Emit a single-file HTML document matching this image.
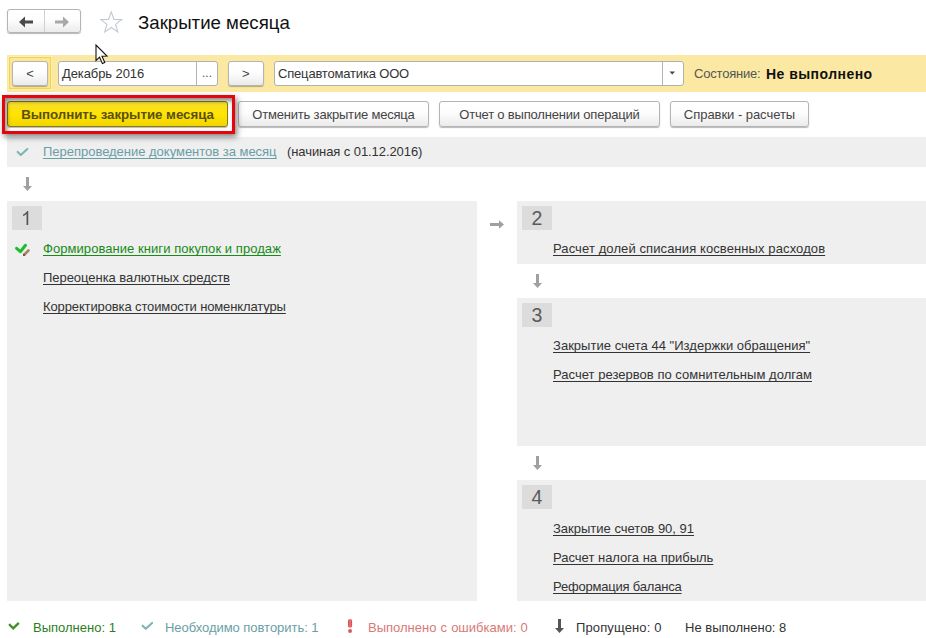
<!DOCTYPE html>
<html><head><meta charset="utf-8">
<style>
html,body{margin:0;padding:0;}
body{width:926px;height:638px;position:relative;overflow:hidden;background:#fff;font-family:"Liberation Sans",sans-serif;font-size:13px;color:#333;}
.abs{position:absolute;}
.t{position:absolute;white-space:nowrap;line-height:16px;height:16px;}
.btn{position:absolute;box-sizing:border-box;border:1px solid #b4b4b4;border-radius:3px;background:linear-gradient(#ffffff 0%,#fdfdfd 45%,#ebebeb 100%);box-shadow:0 1px 1px rgba(0,0,0,.28);text-align:center;white-space:nowrap;color:#444;}
.inp{position:absolute;box-sizing:border-box;border:1px solid #b0b0b0;border-radius:3px;background:#fff;}
.panel{position:absolute;background:#efefef;}
.num{position:absolute;background:#dcdcdc;width:30px;height:24px;text-align:center;font-size:19.5px;line-height:24px;color:#5a5a5a;}
.lnk{position:absolute;white-space:nowrap;line-height:16px;height:16px;color:#333;text-decoration:underline;text-underline-offset:2px;text-decoration-thickness:1px;text-decoration-skip-ink:none;}
</style></head><body>

<!-- nav buttons -->
<div class="btn" style="left:7px;top:9px;width:74px;height:24px;"></div>
<div class="abs" style="left:44px;top:10px;width:1px;height:22px;background:#d0d0d0;"></div>
<svg class="abs" style="left:18px;top:15.5px" width="16" height="12" viewBox="0 0 16 12"><path d="M1 6 L7 0.5 L7 4.5 L15 4.5 L15 7.5 L7 7.5 L7 11.5 Z" fill="#4a4a4a"/></svg>
<svg class="abs" style="left:54px;top:15.5px" width="16" height="12" viewBox="0 0 16 12"><path d="M15 6 L9 0.5 L9 4.5 L1 4.5 L1 7.5 L9 7.5 L9 11.5 Z" fill="#a8a8a8"/></svg>

<!-- star -->
<svg class="abs" style="left:98.7px;top:10.1px" width="24.5" height="24.5" viewBox="0 0 26 26"><path d="M13 2.2 L15.9 9.9 L24 10.2 L17.6 15.3 L19.9 23.2 L13 18.6 L6.1 23.2 L8.4 15.3 L2 10.2 L10.1 9.9 Z" fill="#fff" stroke="#c3c8cf" stroke-width="1.2" stroke-linejoin="miter"/></svg>

<div class="t" style="left:138px;top:11px;font-size:18.67px;line-height:24px;height:24px;color:#111;">Закрытие месяца</div>

<!-- yellow bar -->
<div class="abs" style="left:7px;top:55px;width:919px;height:37px;background:#fbe9a3;"></div>
<div class="abs" style="left:8.8px;top:56.7px;width:42px;height:32.8px;box-sizing:border-box;border:1px solid #f3d252;background:#fce796;box-shadow:0 0 0 1px #fcefb4;"></div>
<div class="btn" style="left:12.3px;top:60.5px;width:35.7px;height:25px;line-height:23px;">&lt;</div>
<div class="inp" style="left:58px;top:61px;width:160px;height:25px;"></div>
<div class="abs" style="left:196px;top:62px;width:1px;height:23px;background:#b4b4b4;"></div>
<div class="t" style="left:62px;top:66px;letter-spacing:-0.1px;">Декабрь 2016</div>
<div class="t" style="left:202px;top:65px;font-size:12px;color:#555;">...</div>
<div class="btn" style="left:228px;top:61px;width:35.5px;height:25px;line-height:23px;">&gt;</div>
<div class="inp" style="left:274px;top:61px;width:410px;height:25px;"></div>
<div class="abs" style="left:662px;top:62px;width:1px;height:23px;background:#b4b4b4;"></div>
<div class="t" style="left:278px;top:66px;letter-spacing:-0.18px;">Спецавтоматика ООО</div>
<svg class="abs" style="left:668.8px;top:71.3px" width="6.5" height="4" viewBox="0 0 8 5"><path d="M0.5 0.5 L7.5 0.5 L4 4.5 Z" fill="#444"/></svg>
<div class="t" style="left:694px;top:66px;color:#555;letter-spacing:-0.2px;">Состояние:</div>
<div class="t" style="left:766px;top:66px;font-weight:bold;font-size:14px;color:#111;letter-spacing:0.45px;">Не выполнено</div>

<!-- command row -->
<div class="abs" style="left:2px;top:95px;width:233px;height:39px;box-sizing:border-box;border:3px solid #e4060c;z-index:5;box-shadow:2px 3px 6px rgba(0,0,0,.5), inset 2px 3px 4px rgba(0,0,0,.45);"></div>
<div class="btn" style="left:7px;top:101px;width:221px;height:26px;line-height:26px;font-weight:bold;font-size:13.33px;letter-spacing:-0.05px;color:#5a4f12;border-color:#8a7a14;background:linear-gradient(#f7dc2e 0%,#ffe500 50%,#f2d400 100%);">Выполнить закрытие месяца</div>
<div class="btn" style="left:238px;top:101px;width:191px;height:26px;line-height:26px;letter-spacing:-0.19px;">Отменить закрытие месяца</div>
<div class="btn" style="left:439px;top:101px;width:221px;height:26px;line-height:26px;letter-spacing:-0.19px;">Отчет о выполнении операций</div>
<div class="btn" style="left:670px;top:101px;width:139px;height:26px;line-height:26px;letter-spacing:-0.04px;">Справки - расчеты</div>

<!-- top gray row -->
<div class="panel" style="left:7px;top:137px;width:919px;height:30px;"></div>
<svg class="abs" style="left:8px;top:140px" width="30" height="24" viewBox="0 0 30 24"><path d="M9.7 11.9 L12.8 14.9 L19.3 8.9" fill="none" stroke="#7fb5b0" stroke-width="2.1" stroke-linecap="round" stroke-linejoin="round"/></svg>
<div class="lnk" style="left:43px;top:144px;color:#6a9ea6;letter-spacing:-0.02px;">Перепроведение документов за месяц</div>
<div class="t" style="left:287px;top:144px;letter-spacing:-0.08px;">(начиная с 01.12.2016)</div>

<!-- arrows -->
<svg class="abs arrd" style="left:22px;top:177px" width="11" height="15" viewBox="0 0 11 15"><path d="M4 0 L7 0 L7 9 L10 9 L5.5 14 L1 9 L4 9 Z" fill="#a0a0a0"/></svg>

<!-- panel 1 -->
<div class="panel" style="left:7px;top:201px;width:470px;height:400px;"></div>
<div class="num" style="left:12px;top:206px;"></div><svg class="abs" style="left:21.14px;top:210.8px" width="10.83" height="14" viewBox="0 0 1139 1472"><path d="M763 1472 H583 V325 Q518 387 412.5 449 Q307 511 223 542 V368 Q374 297 487 196 Q600 95 647 0 H763 Z" fill="#555"/></svg>
<svg class="abs" style="left:10px;top:238px" width="30" height="24" viewBox="0 0 30 24"><path d="M6.6 10.3 L10.5 13.6 L15.5 7.3" fill="none" stroke="#d9f5d9" stroke-width="4.6" stroke-linecap="round" stroke-linejoin="round"/><path d="M6.6 10.3 L10.5 13.6 L15.5 7.3" fill="none" stroke="#22b834" stroke-width="3" stroke-linecap="round" stroke-linejoin="round"/><path d="M14.7 16.2 L18.4 12.5" fill="none" stroke="#ad8263" stroke-width="2.7" stroke-linecap="round"/><path d="M13 18 L13.5 15.6 L15.4 17.5 Z" fill="#4a3428"/></svg>
<div class="lnk" style="left:43px;top:241px;color:#178a17;letter-spacing:0.06px;">Формирование книги покупок и продаж</div>
<div class="lnk" style="left:43px;top:270px;letter-spacing:-0.04px;">Переоценка валютных средств</div>
<div class="lnk" style="left:43px;top:299px;letter-spacing:-0.12px;">Корректировка стоимости номенклатуры</div>

<svg class="abs" style="left:490px;top:219px" width="15" height="11" viewBox="0 0 15 11"><path d="M0 4 L9 4 L9 1.3 L14 5.5 L9 9.7 L9 7 L0 7 Z" fill="#a0a0a0"/></svg>

<!-- panel 2 -->
<div class="panel" style="left:517px;top:201px;width:409px;height:63px;"></div>
<div class="num" style="left:522px;top:206px;">2</div>
<div class="lnk" style="left:553px;top:241px;letter-spacing:0.1px;">Расчет долей списания косвенных расходов</div>
<svg class="abs" style="left:532px;top:274px" width="11" height="15" viewBox="0 0 11 15"><path d="M4 0 L7 0 L7 9 L10 9 L5.5 14 L1 9 L4 9 Z" fill="#a0a0a0"/></svg>

<!-- panel 3 -->
<div class="panel" style="left:517px;top:298px;width:409px;height:148px;"></div>
<div class="num" style="left:522px;top:303px;">3</div>
<div class="lnk" style="left:553px;top:338px;letter-spacing:0.03px;">Закрытие счета 44 "Издержки обращения"</div>
<div class="lnk" style="left:553px;top:367px;letter-spacing:0.03px;">Расчет резервов по сомнительным долгам</div>
<svg class="abs" style="left:532px;top:456px" width="11" height="15" viewBox="0 0 11 15"><path d="M4 0 L7 0 L7 9 L10 9 L5.5 14 L1 9 L4 9 Z" fill="#a0a0a0"/></svg>

<!-- panel 4 -->
<div class="panel" style="left:517px;top:480px;width:409px;height:121px;"></div>
<div class="num" style="left:522px;top:485px;">4</div>
<div class="lnk" style="left:553px;top:521px;">Закрытие счетов 90, 91</div>
<div class="lnk" style="left:553px;top:550px;">Расчет налога на прибыль</div>
<div class="lnk" style="left:553px;top:579px;letter-spacing:-0.2px;">Реформация баланса</div>

<!-- legend -->
<svg class="abs" style="left:4px;top:614px" width="30" height="24" viewBox="0 0 30 24"><path d="M5.9 11 L9.2 14.3 L14 9.7" fill="none" stroke="#3f8f27" stroke-width="2.3" stroke-linecap="square" stroke-linejoin="miter"/></svg>
<div class="t" style="left:33px;top:620px;color:#2a8020;">Выполнено: 1</div>
<svg class="abs" style="left:134px;top:614px" width="30" height="24" viewBox="0 0 30 24"><path d="M8.6 11.7 L11.8 14.8 L18.1 8.9" fill="none" stroke="#7fb5b0" stroke-width="2.1" stroke-linecap="round" stroke-linejoin="round"/></svg>
<div class="t" style="left:165px;top:620px;color:#6a9ea6;letter-spacing:-0.04px;">Необходимо повторить: 1</div>
<svg class="abs" style="left:335px;top:614px" width="30" height="24" viewBox="0 0 30 24"><defs><linearGradient id="ex" x1="0" x2="1" y1="0" y2="0"><stop offset="0" stop-color="#c64545"/><stop offset="0.5" stop-color="#fa7676"/><stop offset="1" stop-color="#c64545"/></linearGradient></defs><rect x="13" y="5.1" width="4.1" height="8.7" rx="2.05" fill="url(#ex)"/><circle cx="15.05" cy="16.9" r="2" fill="#d85c5c"/></svg>
<div class="t" style="left:368px;top:620px;color:#d87a77;word-spacing:0.5px;">Выполнено с ошибками: 0</div>
<svg class="abs" style="left:554px;top:619px" width="11" height="15" viewBox="0 0 11 15"><path d="M4 0 L7 0 L7 9 L10 9 L5.5 14 L1 9 L4 9 Z" fill="#555"/></svg>
<div class="t" style="left:576px;top:620px;letter-spacing:0.13px;">Пропущено: 0</div>
<div class="t" style="left:685px;top:620px;">Не выполнено: 8</div>

<!-- mouse cursor -->
<svg class="abs" style="left:94.7px;top:43.8px" width="14" height="21" viewBox="0 0 14 21"><path d="M1 1 L1 16.5 L4.6 13.2 L7.4 19.6 L9.8 18.5 L7 12.3 L12 12 Z" fill="#fff" stroke="#111" stroke-width="1.1" stroke-linejoin="miter"/></svg>

</body></html>
